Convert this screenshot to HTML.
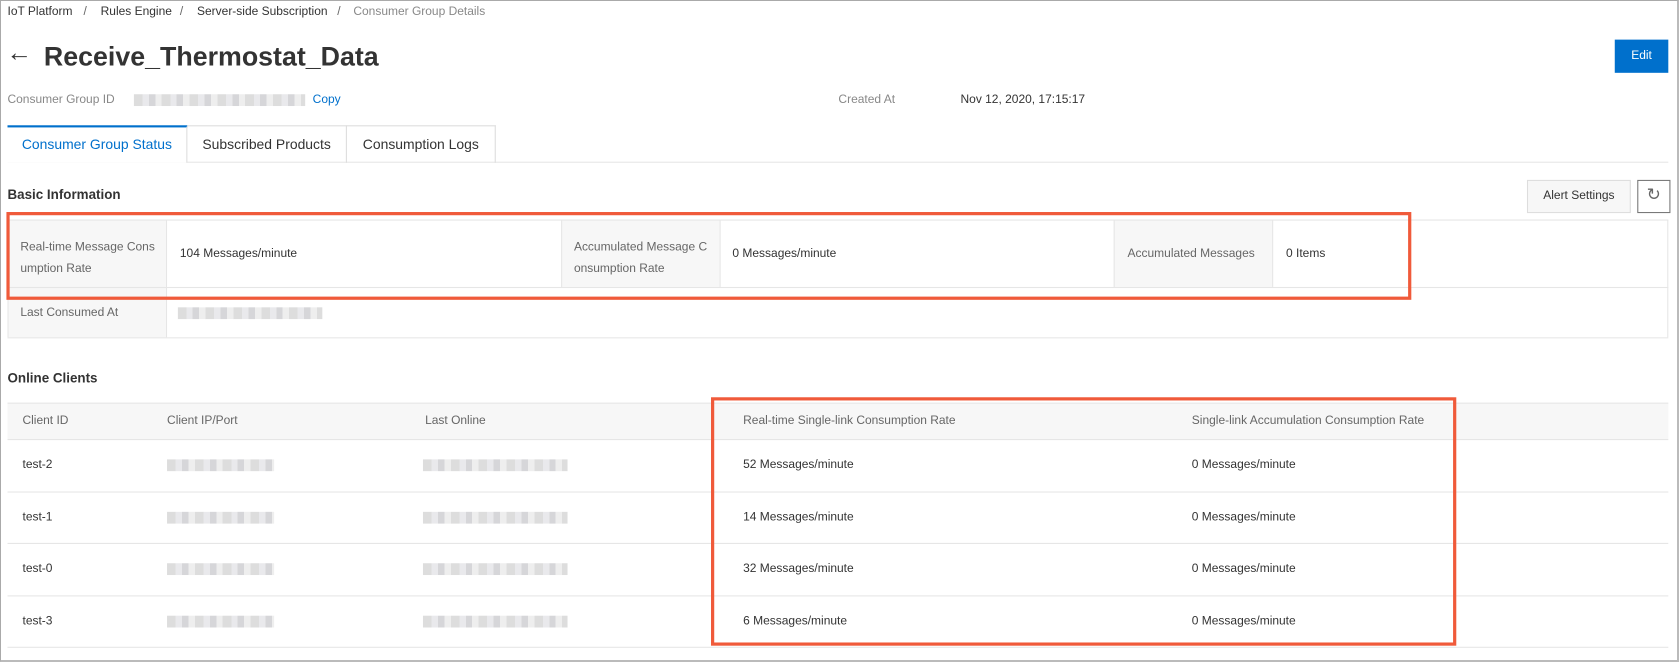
<!DOCTYPE html>
<html><head><style>
*{box-sizing:border-box;margin:0;padding:0}
body{width:1679px;height:662px;background:#fff;font-family:"Liberation Sans",sans-serif;font-size:11.2px;color:#333;position:relative;overflow:hidden}
.frame{position:absolute;left:0;top:0;width:1679px;height:662px;border:1px solid #aaa;border-right:2px solid #bbb;border-bottom:2px solid #bbb;z-index:5}
.wrap{position:absolute;left:0;top:0;width:1568px;height:618px;transform:scale(1.0708);transform-origin:0 0}
.a{position:absolute;white-space:nowrap}
.blur{position:absolute;background:repeating-linear-gradient(90deg,#ddd 0 8px,#e9e9ec 8px 14px,#d6d6d9 14px 20px,#eee 20px 26px);height:11px}
.line{position:absolute;background:#e6e6e6;height:1px}
.vl{position:absolute;background:#e6e6e6;width:1px}
.red{position:absolute;border:3px solid #f05a3a}
</style></head><body>
<div class="frame"></div>
<div class="wrap">
<div class="a" style="left:7px;top:5px;color:#333">IoT Platform</div>
<div class="a" style="left:78px;top:5px;color:#666">/</div>
<div class="a" style="left:94px;top:5px;color:#333">Rules Engine</div>
<div class="a" style="left:168px;top:5px;color:#666">/</div>
<div class="a" style="left:184px;top:5px;color:#333">Server-side Subscription</div>
<div class="a" style="left:315px;top:5px;color:#666">/</div>
<div class="a" style="left:330px;top:5px;color:#888">Consumer Group Details</div>
<div class="a" style="left:6px;top:36px;font-size:24px;color:#333">&#8592;</div>
<div class="a" style="left:41px;top:39px;font-size:25px;font-weight:bold;color:#333">Receive_Thermostat_Data</div>
<div class="a" style="left:1508px;top:37px;width:50px;height:31px;background:#0070cc;color:#fff;text-align:center;line-height:31px">Edit</div>
<div class="a" style="left:7px;top:87px;color:#888">Consumer Group ID</div>
<div class="blur" style="left:125px;top:88px;width:160px"></div>
<div class="a" style="left:292px;top:87px;color:#0070cc">Copy</div>
<div class="a" style="left:783px;top:87px;color:#888">Created At</div>
<div class="a" style="left:897px;top:87px;color:#333">Nov 12, 2020, 17:15:17</div>
<div class="line" style="left:7px;top:151px;width:1551px"></div>
<div class="a" style="left:7px;top:117px;width:168px;height:35px;border-top:2px solid #0070cc;border-right:1px solid #ddd;background:#fff;color:#0070cc;font-size:13px;text-align:center;line-height:32px">Consumer Group Status</div>
<div class="a" style="left:175px;top:117px;width:149px;height:35px;border-top:1px solid #ddd;border-right:1px solid #ddd;font-size:13px;text-align:center;line-height:33px;color:#333">Subscribed Products</div>
<div class="a" style="left:324px;top:117px;width:139px;height:35px;border-top:1px solid #ddd;border-right:1px solid #ddd;font-size:13px;text-align:center;line-height:33px;color:#333">Consumption Logs</div>
<div class="a" style="left:7px;top:175px;font-weight:bold;font-size:12.5px">Basic Information</div>
<div class="a" style="left:1426px;top:168px;width:97px;height:31px;border:1px solid #ddd;background:#f7f7f7;text-align:center;line-height:29px">Alert Settings</div>
<div class="a" style="left:1529px;top:168px;width:31px;height:31px;border:1px solid #777;text-align:center;line-height:28px;font-size:16px;color:#666">&#8635;</div>
<div class="a" style="left:7px;top:205px;width:148px;height:110px;background:#f7f7f7"></div>
<div class="a" style="left:524px;top:205px;width:148px;height:63px;background:#f7f7f7"></div>
<div class="a" style="left:1040px;top:205px;width:148px;height:63px;background:#f7f7f7"></div>
<div class="line" style="left:7px;top:205px;width:1551px"></div>
<div class="line" style="left:7px;top:268px;width:1551px"></div>
<div class="line" style="left:7px;top:315px;width:1551px"></div>
<div class="vl" style="left:7px;top:205px;height:110px"></div>
<div class="vl" style="left:155px;top:205px;height:110px"></div>
<div class="vl" style="left:524px;top:205px;height:63px"></div>
<div class="vl" style="left:672px;top:205px;height:63px"></div>
<div class="vl" style="left:1040px;top:205px;height:63px"></div>
<div class="vl" style="left:1188px;top:205px;height:63px"></div>
<div class="vl" style="left:1557px;top:205px;height:110px"></div>
<div class="a" style="left:19px;top:221px;color:#666;line-height:20px">Real-time Message Cons<br>umption Rate</div>
<div class="a" style="left:168px;top:231px">104 Messages/minute</div>
<div class="a" style="left:536px;top:221px;color:#666;line-height:20px">Accumulated Message C<br>onsumption Rate</div>
<div class="a" style="left:684px;top:231px">0 Messages/minute</div>
<div class="a" style="left:1053px;top:231px;color:#666">Accumulated Messages</div>
<div class="a" style="left:1201px;top:231px">0 Items</div>
<div class="a" style="left:19px;top:286px;color:#666">Last Consumed At</div>
<div class="blur" style="left:166px;top:287px;width:135px"></div>
<div class="red" style="left:6px;top:198px;width:1312px;height:82px"></div>
<div class="a" style="left:7px;top:346px;font-weight:bold;font-size:12.5px">Online Clients</div>
<div class="a" style="left:7px;top:376px;width:1551px;height:34px;background:#f7f7f7"></div>
<div class="line" style="left:7px;top:376px;width:1551px"></div>
<div class="line" style="left:7px;top:410px;width:1551px"></div>
<div class="line" style="left:7px;top:459px;width:1551px"></div>
<div class="line" style="left:7px;top:507px;width:1551px"></div>
<div class="line" style="left:7px;top:556px;width:1551px"></div>
<div class="line" style="left:7px;top:604px;width:1551px"></div>
<div class="a" style="left:21px;top:387px;color:#666">Client ID</div>
<div class="a" style="left:156px;top:387px;color:#666">Client IP/Port</div>
<div class="a" style="left:397px;top:387px;color:#666">Last Online</div>
<div class="a" style="left:694px;top:387px;color:#666">Real-time Single-link Consumption Rate</div>
<div class="a" style="left:1113px;top:387px;color:#666">Single-link Accumulation Consumption Rate</div>
<div class="a" style="left:21px;top:428px">test-2</div>
<div class="a" style="left:21px;top:477px">test-1</div>
<div class="a" style="left:21px;top:525px">test-0</div>
<div class="a" style="left:21px;top:574px">test-3</div>
<div class="blur" style="left:156px;top:429px;width:100px"></div>
<div class="blur" style="left:156px;top:478px;width:100px"></div>
<div class="blur" style="left:156px;top:526px;width:100px"></div>
<div class="blur" style="left:156px;top:575px;width:100px"></div>
<div class="blur" style="left:395px;top:429px;width:135px"></div>
<div class="blur" style="left:395px;top:478px;width:135px"></div>
<div class="blur" style="left:395px;top:526px;width:135px"></div>
<div class="blur" style="left:395px;top:575px;width:135px"></div>
<div class="a" style="left:694px;top:428px">52 Messages/minute</div>
<div class="a" style="left:694px;top:477px">14 Messages/minute</div>
<div class="a" style="left:694px;top:525px">32 Messages/minute</div>
<div class="a" style="left:694px;top:574px">6 Messages/minute</div>
<div class="a" style="left:1113px;top:428px">0 Messages/minute</div>
<div class="a" style="left:1113px;top:477px">0 Messages/minute</div>
<div class="a" style="left:1113px;top:525px">0 Messages/minute</div>
<div class="a" style="left:1113px;top:574px">0 Messages/minute</div>
<div class="red" style="left:664px;top:371px;width:696px;height:232px"></div>
</div>
</body></html>
